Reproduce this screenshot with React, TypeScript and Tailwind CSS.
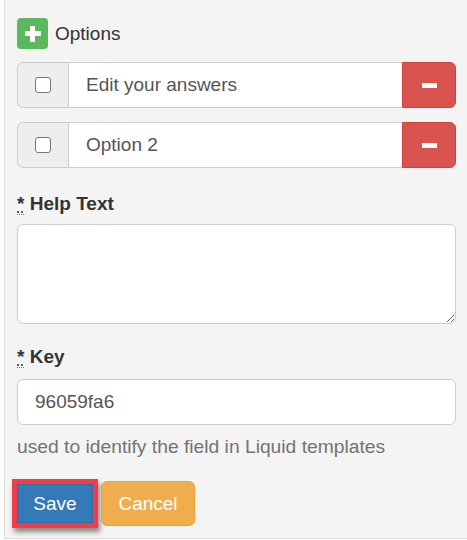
import React from "react";

function Checkbox() {
  return <span className="block w-[16px] h-[16px] rounded-[3px] border-[1.5px] border-[#767676] bg-white" />;
}

function OptionRow({ text }: { text: string }) {
  return (
    <div className="flex h-[46px]">
      <div className="w-[52px] flex items-center justify-center bg-[#eeeeee] border border-[#cccccc] rounded-l-[6px]">
        <Checkbox />
      </div>
      <div className="flex-1 flex items-center bg-white border-y border-[#cccccc] pl-[17px] text-[19px] leading-[20px] text-[#555555]">
        {text}
      </div>
      <div className="w-[54px] flex items-center justify-center bg-[#d9534f] border border-[#d43f3a] rounded-r-[6px]">
        <span className="block w-[15px] h-[5px] bg-white" />
      </div>
    </div>
  );
}

function Label({ text }: { text: string }) {
  return (
    <div className="h-[20px] text-[19px] leading-[20px] font-bold text-[#333333]">
      <abbr title="required" className="underline decoration-dotted decoration-[#555555] underline-offset-[2px] border-b border-dotted border-[#777777] font-bold">*</abbr>{" "}
      {text}
    </div>
  );
}

export default function App() {
  return (
    <div className="w-[467px] h-[540px] bg-white" style={{ fontFamily: '"Liberation Sans", Arial, sans-serif' }}>
      <div className="ml-[4px] h-[539px] bg-[#f4f4f4] border-l border-b border-[#dddddd] pl-[12px] pr-[11px] pt-[18px]">
        <div className="flex items-center h-[31px]">
          <div className="w-[31px] h-[31px] rounded-[4px] bg-[#5cb85c] flex items-center justify-center relative">
            <span className="absolute w-[16px] h-[5px] bg-white" />
            <span className="absolute w-[5px] h-[16px] bg-white" />
          </div>
          <span className="ml-[7px] text-[19px] leading-[20px] text-[#333333]">Options</span>
        </div>
        <div className="mt-[13px]">
          <OptionRow text="Edit your answers" />
        </div>
        <div className="mt-[14px]">
          <OptionRow text="Option 2" />
        </div>
        <div className="mt-[26px]">
          <Label text="Help Text" />
        </div>
        <textarea className="mt-[10px] block w-full h-[100px] bg-white border border-[#cccccc] rounded-[6px] resize-y outline-none" />
        <div className="mt-[23px]">
          <Label text="Key" />
        </div>
        <div className="mt-[12px] h-[46px] bg-white border border-[#cccccc] rounded-[6px] flex items-center pl-[17px] text-[19px] leading-[20px] text-[#555555]">
          96059fa6
        </div>
        <div className="mt-[12px] text-[19.25px] leading-[20px] text-[#737373]">
          used to identify the field in Liquid templates
        </div>
        <div className="mt-[22px] flex items-center gap-[3px] ml-[-5px]">
          <div className="border-[5px] border-[#f23c47] shadow-[2px_4px_5px_rgba(0,0,0,0.45)]">
            <div className="w-[76px] h-[39px] bg-[#337ab7] border border-[#2e6da4] flex items-center justify-center text-white text-[19px] leading-[20px]">
              Save
            </div>
          </div>
          <div className="w-[94px] h-[45px] bg-[#f0ad4e] border border-[#eea236] rounded-[6px] flex items-center justify-center text-white text-[19px] leading-[20px]">
            Cancel
          </div>
        </div>
      </div>
    </div>
  );
}
